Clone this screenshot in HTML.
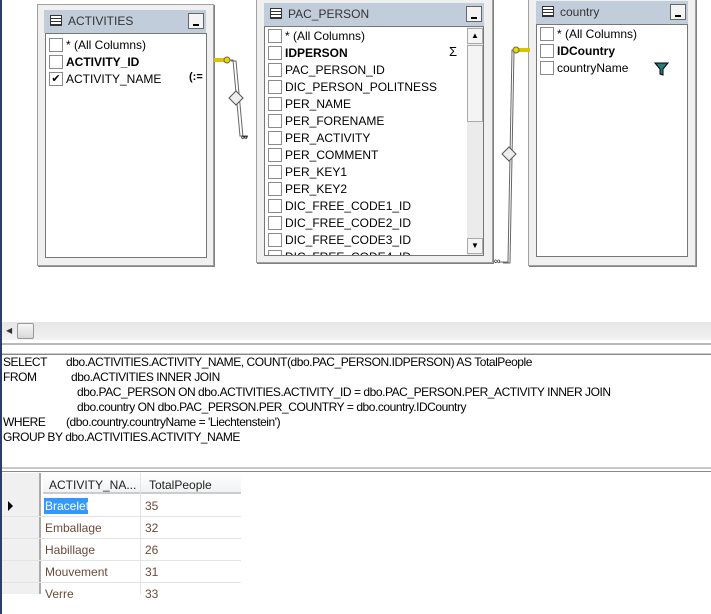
<!DOCTYPE html>
<html><head><style>
*{margin:0;padding:0;box-sizing:border-box}
body{width:711px;height:614px;background:#fff;position:relative;overflow:hidden;font-family:"Liberation Sans",sans-serif;font-size:12px;color:#000}
.a{position:absolute}
.box{position:absolute;background:#f0f0f0;border:1px solid #a0a0a0;box-shadow:1px 1px 0 #808080}
.title{position:absolute;background:#c2cddb;color:#333;font-size:12px}
.title span{position:absolute;left:24px;top:4px}
.ticon{position:absolute;left:6px;top:5px;width:12px;height:11px;border:1px solid #333;background:repeating-linear-gradient(0deg,#333 0 1px,#fff 1px 3px)}
.min{position:absolute;right:2px;top:3px;width:16px;height:16px;background:#f4f4f4;border:1px solid #666}
.min:after{content:"";position:absolute;left:4px;top:10px;width:6px;height:2px;background:#000}
.list{position:absolute;background:#fff;border:1px solid #777;overflow:hidden}
.row{position:absolute;left:3px;height:17px;white-space:nowrap}
.cb{position:absolute;left:0;top:1px;width:14px;height:14px;border:1px solid #8a8a8a;background:#fff}
.row span{position:absolute;left:17px;top:1px}
.b{font-weight:bold}
.sql{position:absolute;left:3px;font-size:12px;white-space:nowrap;letter-spacing:-0.45px}
.gr{position:absolute;font-size:12px;color:#6b4a3a}
</style></head><body>
<div class="a" style="left:0;top:0;width:2px;height:614px;background:#2b3f66"></div>

<!-- ACTIVITIES -->
<div class="box" style="left:37px;top:4px;width:177px;height:262px"></div>
<div class="title" style="left:44px;top:10px;width:162px;height:23px"><div class="ticon"></div><span>ACTIVITIES</span><div class="min"></div></div>
<div class="list" style="left:45px;top:33px;width:162px;height:225px">
<div class="row" style="top:3px"><div class="cb"></div><span>* (All Columns)</span></div>
<div class="row" style="top:20px"><div class="cb"></div><span class="b">ACTIVITY_ID</span></div>
<div class="row" style="top:37px"><div class="cb" style="font-size:11px;line-height:12px;text-align:center">✔</div><span>ACTIVITY_NAME</span></div>
<div class="a" style="left:143px;top:37px;font-weight:bold;font-size:11px">(:=</div>
</div>

<!-- PAC_PERSON -->
<div class="box" style="left:256px;top:-2px;width:237px;height:265px"></div>
<div class="title" style="left:264px;top:3px;width:220px;height:23px"><div class="ticon"></div><span>PAC_PERSON</span><div class="min"></div></div>
<div class="list" style="left:264px;top:26px;width:220px;height:230px">
<div class="row" style="top:1px"><div class="cb"></div><span>* (All Columns)</span></div>
<div class="row" style="top:18px"><div class="cb"></div><span class="b">IDPERSON</span></div>
<div class="a" style="left:184px;top:17px;font-size:13px">Σ</div>
<div class="row" style="top:35px"><div class="cb"></div><span>PAC_PERSON_ID</span></div>
<div class="row" style="top:52px"><div class="cb"></div><span>DIC_PERSON_POLITNESS</span></div>
<div class="row" style="top:69px"><div class="cb"></div><span>PER_NAME</span></div>
<div class="row" style="top:86px"><div class="cb"></div><span>PER_FORENAME</span></div>
<div class="row" style="top:103px"><div class="cb"></div><span>PER_ACTIVITY</span></div>
<div class="row" style="top:120px"><div class="cb"></div><span>PER_COMMENT</span></div>
<div class="row" style="top:137px"><div class="cb"></div><span>PER_KEY1</span></div>
<div class="row" style="top:154px"><div class="cb"></div><span>PER_KEY2</span></div>
<div class="row" style="top:171px"><div class="cb"></div><span>DIC_FREE_CODE1_ID</span></div>
<div class="row" style="top:188px"><div class="cb"></div><span>DIC_FREE_CODE2_ID</span></div>
<div class="row" style="top:205px"><div class="cb"></div><span>DIC_FREE_CODE3_ID</span></div>
<div class="row" style="top:222px"><div class="cb"></div><span>DIC_FREE_CODE4_ID</span></div>
<div class="a" style="left:202px;top:0;width:17px;height:229px;background:#ebebeb"></div>
<div class="a" style="left:202px;top:1px;width:16px;height:16px;background:#f4f4f4;border:1px solid #aaa;font-size:8px;text-align:center;line-height:14px">▲</div>
<div class="a" style="left:202px;top:18px;width:16px;height:77px;background:#f4f4f4;border:1px solid #aaa"></div>
<div class="a" style="left:202px;top:211px;width:16px;height:16px;background:#f4f4f4;border:1px solid #aaa;font-size:8px;text-align:center;line-height:14px">▼</div>
</div>

<!-- country -->
<div class="box" style="left:528px;top:-3px;width:168px;height:269px"></div>
<div class="title" style="left:536px;top:1px;width:152px;height:23px"><div class="ticon"></div><span>country</span><div class="min"></div></div>
<div class="list" style="left:536px;top:24px;width:152px;height:233px">
<div class="row" style="top:1px"><div class="cb"></div><span>* (All Columns)</span></div>
<div class="row" style="top:18px"><div class="cb"></div><span class="b">IDCountry</span></div>
<div class="row" style="top:35px"><div class="cb"></div><span>countryName</span></div>
<svg class="a" style="left:117px;top:37px" width="15" height="14"><path d="M1 1 L14 1 L9 7 L9 13 L6 12 L6 7 Z" fill="#2a7a7a" stroke="#000" stroke-width="1"/></svg>
</div>

<!-- relationship lines -->
<svg class="a" style="left:0;top:0" width="711" height="270">
<g fill="none" stroke="#666" stroke-width="1">
<path d="M228 60 L233 60 L240 136 L248 136"/><path d="M231 61 L236 61 L243 137 L248 137"/>
<path d="M500 262 L508 262 L512 50 L516 50"/><path d="M503 263 L510 263 L514 51 L516 51"/>
</g>
<rect x="214" y="58" width="14" height="4" fill="#d8c400"/><circle cx="227" cy="60" r="3" fill="#e8d800" stroke="#665"/>
<rect x="518" y="48" width="12" height="4" fill="#d8c400"/><circle cx="516" cy="50" r="3" fill="#e8d800" stroke="#665"/>
<path d="M236 91 L243 98 L236 105 L229 98Z" fill="#eee" stroke="#555"/>
<path d="M509 147 L516 154 L509 161 L502 154Z" fill="#eee" stroke="#555"/>
<text x="241" y="140" font-size="9" font-family="Liberation Sans">∞</text>
<text x="494" y="264" font-size="9" font-family="Liberation Sans">∞</text>
</svg>

<!-- horizontal scrollbar -->
<div class="a" style="left:2px;top:322px;width:709px;height:18px;background:linear-gradient(#e6e6e6,#f2f2f2)"></div>
<div class="a" style="left:6px;top:326px;font-size:8px;color:#333">◀</div>
<div class="a" style="left:17px;top:323px;width:17px;height:16px;background:linear-gradient(#f6f6f6,#d8d8d8);border:1px solid #999;border-radius:2px"></div>
<div class="a" style="left:2px;top:343px;width:709px;height:2px;background:#b9b9b9"></div>
<div class="a" style="left:2px;top:353px;width:709px;height:1px;background:#ccc"></div>
<div class="a" style="left:2px;top:354px;width:709px;height:1px;background:#888"></div>

<!-- SQL -->
<div class="sql" style="top:355px">SELECT</div><div class="sql" style="left:66px;top:355px">dbo.ACTIVITIES.ACTIVITY_NAME, COUNT(dbo.PAC_PERSON.IDPERSON) AS TotalPeople</div>
<div class="sql" style="top:370px">FROM</div><div class="sql" style="left:71px;top:370px">dbo.ACTIVITIES INNER JOIN</div>
<div class="sql" style="left:77px;top:385px">dbo.PAC_PERSON ON dbo.ACTIVITIES.ACTIVITY_ID = dbo.PAC_PERSON.PER_ACTIVITY INNER JOIN</div>
<div class="sql" style="left:77px;top:400px">dbo.country ON dbo.PAC_PERSON.PER_COUNTRY = dbo.country.IDCountry</div>
<div class="sql" style="top:415px">WHERE</div><div class="sql" style="left:66px;top:415px">(dbo.country.countryName = 'Liechtenstein')</div>
<div class="sql" style="top:430px">GROUP BY dbo.ACTIVITIES.ACTIVITY_NAME</div>
<div class="a" style="left:2px;top:467px;width:709px;height:2px;background:#c8c8c8"></div>
<div class="a" style="left:2px;top:471px;width:709px;height:1px;background:#888"></div>

<!-- grid -->
<div class="a" style="left:2px;top:473px;width:239px;height:121px;background:#fff"></div>
<div class="a" style="left:2px;top:473px;width:39px;height:121px;background:#f0f0f0;border-right:2px solid #aaa"></div>
<div class="a" style="left:43px;top:473px;width:198px;height:21px;background:linear-gradient(#fff,#f1f2f4);border-bottom:2px solid #ccc"></div>
<div class="a" style="left:140px;top:473px;width:1px;height:121px;background:#e4e4e4"></div>
<div class="a" style="left:49px;top:478px;color:#222">ACTIVITY_NA...</div>
<div class="a" style="left:149px;top:478px;color:#222">TotalPeople</div>
<div class="a" style="left:2px;top:516px;width:239px;height:1px;background:#e4e4e4"></div>
<div class="a" style="left:2px;top:538px;width:239px;height:1px;background:#e4e4e4"></div>
<div class="a" style="left:2px;top:560px;width:239px;height:1px;background:#e4e4e4"></div>
<div class="a" style="left:2px;top:582px;width:239px;height:1px;background:#e4e4e4"></div>
<div class="a" style="left:8px;top:501px;width:0;height:0;border-top:5px solid transparent;border-bottom:5px solid transparent;border-left:5px solid #000"></div>
<div class="a" style="left:44px;top:498px;width:44px;height:16px;background:#3399ff"></div>
<div class="gr" style="left:45px;top:499px;color:#fff">Bracelet</div><div class="gr" style="left:145px;top:499px">35</div>
<div class="gr" style="left:45px;top:521px">Emballage</div><div class="gr" style="left:145px;top:521px">32</div>
<div class="gr" style="left:45px;top:543px">Habillage</div><div class="gr" style="left:145px;top:543px">26</div>
<div class="gr" style="left:45px;top:565px">Mouvement</div><div class="gr" style="left:145px;top:565px">31</div>
<div class="gr" style="left:45px;top:587px">Verre</div><div class="gr" style="left:145px;top:587px">33</div>
</body></html>
